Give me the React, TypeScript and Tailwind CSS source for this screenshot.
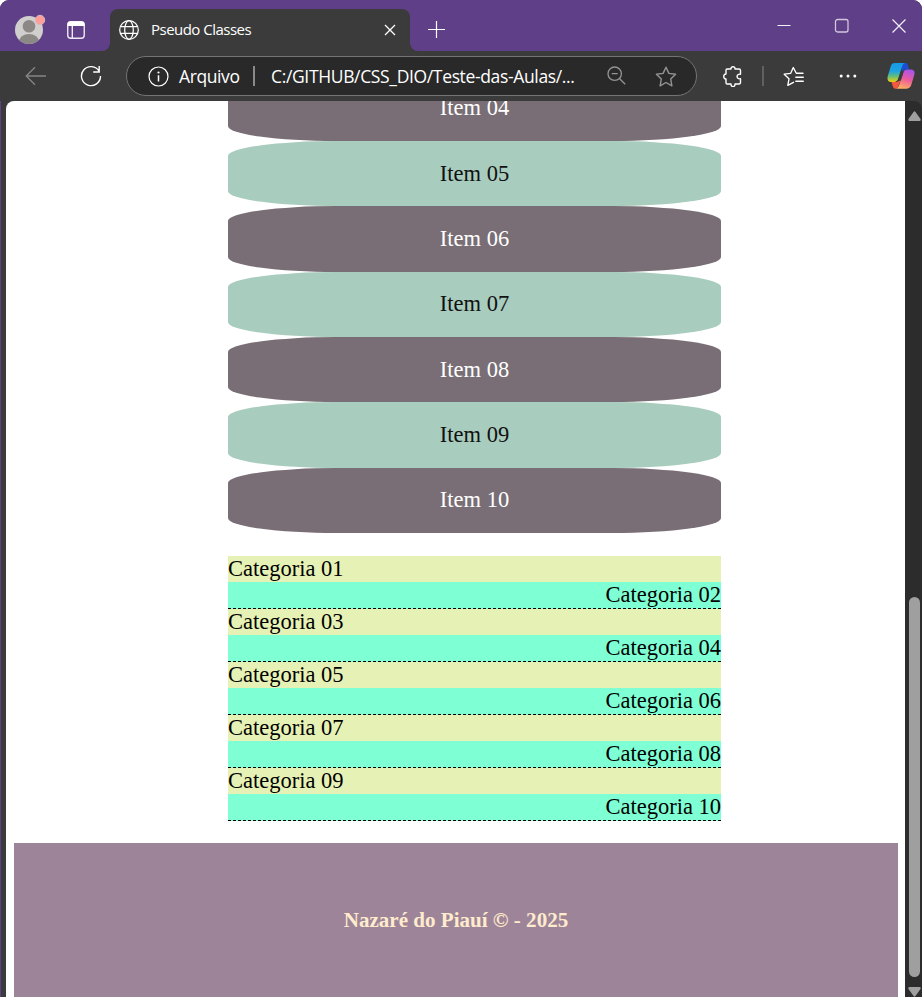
import React from 'react';

const items = ['04', '05', '06', '07', '08', '09', '10'];
const categories = ['01', '02', '03', '04', '05', '06', '07', '08', '09', '10'];

function TitleBar() {
  return (
    <div className="flex h-[51px] bg-[#5f3f87]">
      <div className="flex w-[110px] shrink-0">
        <svg className="ml-[14px] mt-[14px] h-8 w-8" viewBox="0 0 32 32">
          <defs>
            <clipPath id="face"><circle cx="15" cy="16" r="14" /></clipPath>
          </defs>
          <circle cx="15" cy="16" r="14" fill="#d1cfcd" />
          <g clipPath="url(#face)" fill="#8b8885">
            <circle cx="15" cy="12.3" r="6.3" />
            <ellipse cx="15" cy="28" rx="10" ry="8" />
          </g>
          <circle cx="26" cy="6" r="4.7" fill="#ff9d98" stroke="#d9b9c4" strokeWidth="1" />
        </svg>
        <svg className="ml-[20px] mt-[20px] h-5 w-5" viewBox="0 0 20 20" fill="none">
          <rect x="1.75" y="1.75" width="16.5" height="16.5" rx="3" stroke="#eee9f4" strokeWidth="1.4" />
          <path d="M1.5 6V4.5a3 3 0 0 1 3-3h11a3 3 0 0 1 3 3V6z" fill="#fff" />
          <path d="M6.3 6v12" stroke="#eee9f4" strokeWidth="1.4" />
        </svg>
      </div>
      <div className="relative mt-[9px] flex h-[42px] w-[300px] items-center rounded-t-[8px] bg-[#3b3b3b] pl-[9px]">
        <svg className="absolute bottom-0 -left-2 h-2 w-2" viewBox="0 0 8 8"><path d="M8 0v8H0a8 8 0 0 0 8-8" fill="#3b3b3b" /></svg>
        <svg className="absolute -right-2 bottom-0 h-2 w-2" viewBox="0 0 8 8"><path d="M0 0v8h8a8 8 0 0 1-8-8" fill="#3b3b3b" /></svg>
        <svg className="h-5 w-5" viewBox="0 0 20 20" fill="none" stroke="#fff" strokeWidth="1.25">
          <circle cx="10" cy="10" r="9.3" />
          <ellipse cx="10" cy="10" rx="4.3" ry="9.3" />
          <path d="M1.5 6.6h17M1.5 13.4h17" />
        </svg>
        <span className="-mt-[2px] ml-[12px] w-[210px] whitespace-nowrap font-['Open_Sans',sans-serif] text-[15px] leading-5 tracking-[-0.52px] text-white">Pseudo Classes</span>
        <svg className="ml-[23px] h-3 w-3" viewBox="0 0 12 12" stroke="#fff" strokeWidth="1.3"><path d="M1 1l10 10M11 1L1 11" /></svg>
      </div>
      <svg className="ml-[17px] mt-[20px] h-[19px] w-[19px]" viewBox="0 0 19 19" stroke="#fff" strokeWidth="1.2"><path d="M1 9.5h17M9.5 1v17" /></svg>
      <svg className="ml-auto mr-[43px] mt-[18px] h-4 w-[14px]" viewBox="0 0 14 16" stroke="#f3eff8" strokeWidth="1.1"><path d="M.5 7.5h13" /></svg>
      <svg className="mr-[43px] mt-[18px] h-[15px] w-[15px]" viewBox="0 0 15 15" fill="none"><rect x="1.5" y="1.5" width="12.5" height="12.5" rx="2" stroke="#d2c8dc" strokeWidth="1.3" /></svg>
      <svg className="mr-[16px] mt-[19px] h-[14px] w-[14px]" viewBox="0 0 14 14" stroke="#f3eff8" strokeWidth="1.2"><path d="M.5.5l13 13M13.5.5l-13 13" /></svg>
    </div>
  );
}

function Toolbar() {
  return (
    <div className="flex h-[50px] items-center bg-[#3b3b3b]">
      <svg className="ml-[25px] h-5 w-[22px]" viewBox="0 0 22 20" fill="none" stroke="#858585" strokeWidth="1.3"><path d="M21 10H1.5M10 1.2L1.2 10l8.8 8.8" /></svg>
      <svg className="ml-[33px] h-[22px] w-[22px]" viewBox="0 0 22 22" fill="none" stroke="#fff" strokeWidth="1.4"><path d="M19.2 6.3A9.5 9.5 0 1 0 20.5 11M19.2 1v6h-6" /></svg>
      <div className="ml-[24px] flex h-10 w-[571px] shrink-0 items-center rounded-full border border-[#747474] bg-[#292929] font-['Open_Sans',sans-serif] text-white">
        <svg className="ml-[21px] h-[21px] w-[21px]" viewBox="0 0 21 21" fill="none" stroke="#fff" strokeWidth="1.2">
          <circle cx="10.5" cy="10.5" r="9.5" /><path d="M10.5 9.2v6.2" strokeWidth="1.5" /><circle cx="10.5" cy="6.5" r="1.1" fill="#fff" stroke="none" />
        </svg>
        <span className="ml-[10px] w-[74px] whitespace-nowrap text-[17.5px] leading-6 tracking-[-0.4px]">Arquivo</span>
        <span className="h-5 w-[2px] bg-[#8a8a8a]" />
        <span className="ml-[16px] w-[315px] whitespace-nowrap text-[17.5px] leading-6 tracking-[-0.35px]">C:/GITHUB/CSS_DIO/Teste-das-Aulas/...</span>
        <svg className="-mt-px ml-[21px] h-[19px] w-[19px]" viewBox="0 0 19 19" fill="none" stroke="#949494" strokeWidth="1.3"><circle cx="7.7" cy="7.7" r="6.7" /><path d="M12.7 12.7l5.5 5.5M4.7 7.7h6" /></svg>
        <svg className="ml-[29px] h-[21px] w-[22px]" viewBox="0 0 22 21" fill="none" stroke="#949494" strokeWidth="1.4" strokeLinejoin="round"><path d="M11 1.2l2.9 6.2 6.7.9-4.9 4.7 1.2 6.8-5.9-3.3-5.9 3.3 1.2-6.8-4.9-4.7 6.7-.9z" /></svg>
      </div>
      <svg className="ml-[26px] h-[21px] w-[19px] shrink-0" viewBox="0 0 19 21" fill="none" stroke="#fff" strokeWidth="1.4" strokeLinejoin="round"><path d="M4.2 3H8c-.3-3 4.3-3 4 0h4q1.5 0 1.5 1.5v3.7c-4.6-.8-4.6 5.4 0 4.6v3.7q0 1.5-1.5 1.5h-4c.3 3.5-4.3 3.5-4 0H4.2q-1.2 0-1.2-1.2V13c-3 .3-3-5.3 0-5V4.2Q3 3 4.2 3z" /></svg>
      <span className="ml-[20px] h-5 w-[2px] shrink-0 bg-[#606060]" />
      <svg className="ml-[19px] h-[21px] w-[22px] shrink-0" viewBox="0 0 22 21" fill="none" stroke="#fff" strokeWidth="1.35" strokeLinejoin="round" strokeLinecap="round"><path d="M20 7.2h-6.7L10.3 1.5 7.7 7.3l-6.5.9 4.8 4.6-1.2 6.5 5.7-3M12.8 11.2h7.5M12.8 15.2h7.5" /></svg>
      <svg className="ml-[34px] h-4 w-[18px] shrink-0" viewBox="0 0 18 16" fill="#fff"><circle cx="2.2" cy="8" r="1.5" /><circle cx="9" cy="8" r="1.5" /><circle cx="15.8" cy="8" r="1.5" /></svg>
      <svg className="ml-[30px] h-7 w-7 shrink-0" viewBox="0 0 28 28">
        <defs>
          <linearGradient id="cool" x1="0" y1="0" x2="0" y2="1"><stop stopColor="#1499e8" /><stop offset=".45" stopColor="#20a5df" /><stop offset=".7" stopColor="#63bd79" /><stop offset="1" stopColor="#f1d20b" /></linearGradient>
          <linearGradient id="warm" x1=".7" y1="0" x2=".4" y2="1"><stop stopColor="#a653ee" /><stop offset=".5" stopColor="#eb5a9e" /><stop offset="1" stopColor="#ffae62" /></linearGradient>
        </defs>
        <path d="M14 1h4.4c1.4 0 2.1.9 2.5 2.3l1.3 4.2h-3.4c-1.6 0-2.6.8-3.3 2.5L14 5z" fill="#1b4fd3" />
        <path d="M13.4 18.5l-2 5.2c-.6 1.8-1.3 3-3 3-1.5 0-2.2-1-2.7-2.6L4.5 20h4c2 0 3.2-.6 4-1.5z" fill="#f6583f" />
        <path d="M7.8 1H18c-1.7.3-2.5 1.9-3.1 4l-3.6 11.3C10.4 19 9.2 20 7 20H4C.8 20-.1 17.4.8 14L3.7 4.4C4.4 2.2 5.6 1 7.8 1z" fill="url(#cool)" />
        <path d="M20.6 7.5H24c3 0 4.2 2.1 3.3 5.3l-2.9 9.8c-.8 2.8-2.2 4.1-4.7 4.1H8.8c1.8-.3 2.8-2 3.5-4.2L15.6 12c.9-3 2-4.5 5-4.5z" fill="url(#warm)" />
        <path d="M13.8 9.5h3l-2.9 9h-3z" fill="#3b3b3b" />
      </svg>
    </div>
  );
}

function Scrollbar() {
  return (
    <div className="flex w-[17px] shrink-0 flex-col items-center rounded-tr-[8px] bg-[#2c2c2c] pl-[2px]">
      <svg className="mt-[10px] h-[10px] w-[13px]" viewBox="0 0 13 10"><path d="M5.5 1Q6.5-.3 7.5 1l5 7q.7 2-1 2H1.5q-1.7 0-1-2z" fill="#a0a0a0" /></svg>
      <div className="mt-[476px] h-[380px] w-[11px] shrink-0 rounded-full bg-[#9f9f9f]" />
      <svg className="mt-[10px] h-[10px] w-[13px] shrink-0" viewBox="0 0 13 10"><path d="M5.5 9Q6.5 10.3 7.5 9l5-7q.7-2-1-2H1.5Q-.2 0 .5 2z" fill="#a0a0a0" /></svg>
    </div>
  );
}

export default function App() {
  return (
    <div className="h-[997px] w-[922px] overflow-hidden rounded-t-[9px] bg-[#3b3b3b]">
      <TitleBar />
      <Toolbar />
      <div className="flex h-[896px] border-l border-[#5f3f87] pl-[5px]">
        <main className="flex w-[899px] flex-col overflow-hidden rounded-tl-[8px] bg-white px-[8px] font-['Liberation_Serif',serif] text-[22.5px]">
          <ul className="-mt-[25.4px] ml-[214px] w-[493px] shrink-0">
            {items.map((n, i) => (
              <li key={n} className={`flex h-[65.35px] items-center justify-center rounded-[22%/23%] pb-[0.2px] leading-[26px] ${i % 2 ? 'bg-[#a8ccbe] text-[#111]' : 'bg-[#796e75] text-white'}`}>Item {n}</li>
            ))}
          </ul>
          <ul className="ml-[214px] mt-[23px] w-[493px] shrink-0">
            {categories.map((n, i) => (
              <li key={n} className={i % 2 ? 'h-[27px] border-b border-dashed border-black bg-[#7fffd4] text-right leading-[26px]' : 'h-[26px] bg-[#e6f2b5] leading-[26px]'}>Categoria {n}</li>
            ))}
          </ul>
          <footer className="mt-[22px] h-[160px] w-[884px] shrink-0 bg-[#9d8498] pt-[65px] text-center text-[21.05px] font-bold leading-6 text-[#ffebcd]">Nazaré do Piauí © - 2025</footer>
        </main>
        <Scrollbar />
      </div>
    </div>
  );
}
